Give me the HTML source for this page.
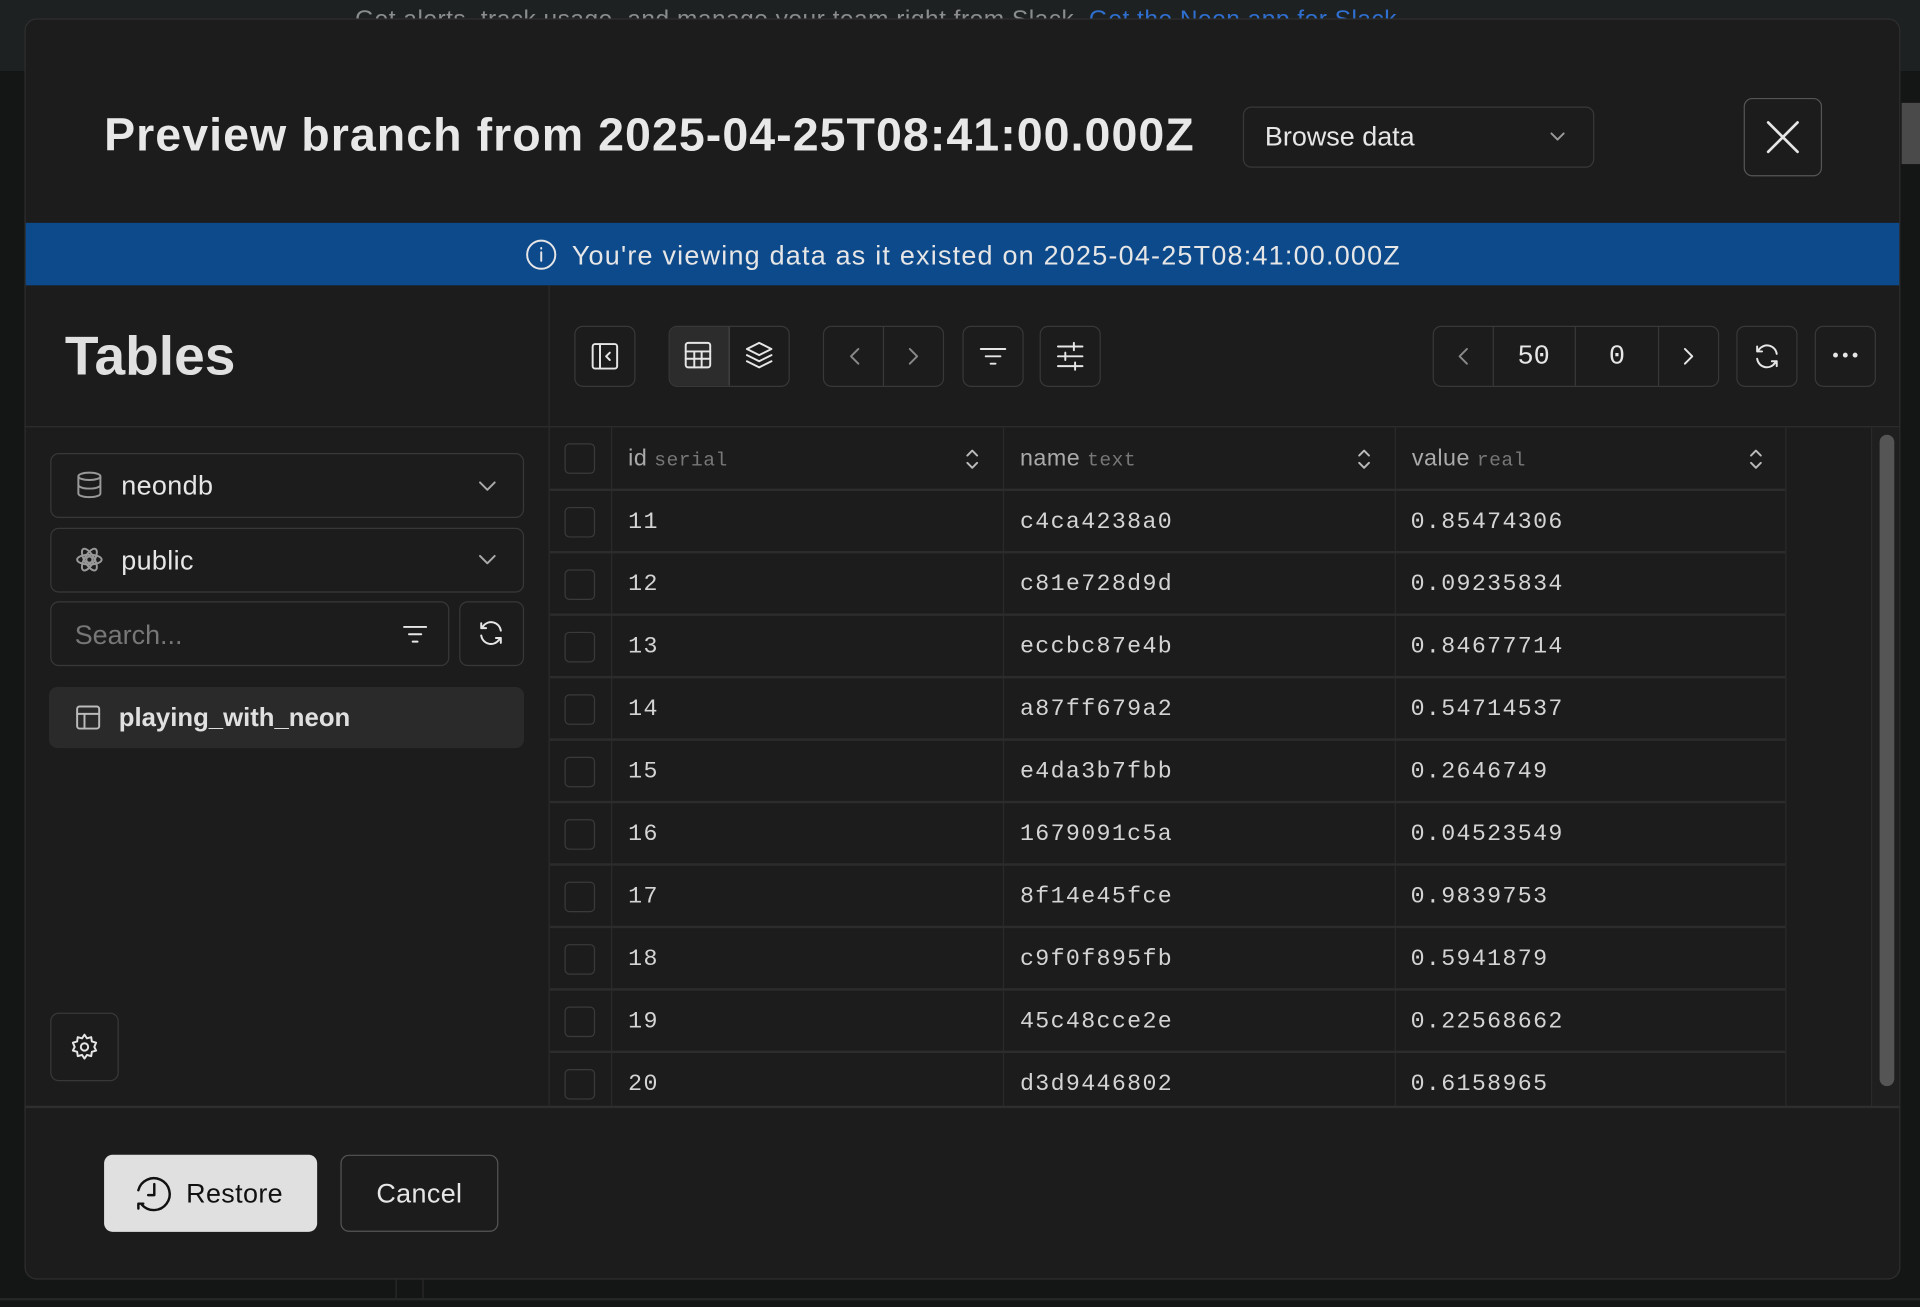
<!DOCTYPE html>
<html><head><meta charset="utf-8"><style>
*{box-sizing:border-box;margin:0;padding:0}
html,body{width:1920px;height:1307px;overflow:hidden;background:#141515}
#s{position:absolute;left:0;top:0;width:1568px;height:1067px;transform:scale(1.22449);transform-origin:0 0;font-family:"Liberation Sans",sans-serif;color:#e6e6e6}
.a{position:absolute}
.btn{position:absolute;border:1px solid #383838;border-radius:7px}
.mono{font-family:"Liberation Mono",monospace}
svg{position:absolute;fill:none;stroke:#e6e6e6;stroke-width:1.6;stroke-linecap:round;stroke-linejoin:round}
.row{position:absolute;left:449px;width:1009px;height:51px;border-top:2px solid #2c2c2c}
.row .cb{position:absolute;left:12px;top:13px;width:25px;height:25px;border:1px solid #3a3a3a;border-radius:4px}
.row .c{position:absolute;top:1px;height:49px;line-height:49px;font-family:"Liberation Mono",monospace;font-size:19px;color:#d4d4d4;letter-spacing:1.1px}
.vl{position:absolute;top:349px;height:554px;width:1px;background:#2a2a2a}
</style></head><body><div id="s">
<div class="a" style="left:0;top:0;width:1568px;height:58px;background:#1e2122"></div>
<div class="a" style="left:290px;top:5px;font-size:20px;color:#8a8c8d;white-space:nowrap;letter-spacing:0.4px">Get alerts, track usage, and manage your team right from Slack. <span style="color:#2f6fd0">Get the Neon app for Slack</span></div>
<div class="a" style="left:1553px;top:84px;width:15px;height:50px;background:#4a4a4a"></div>
<div class="a" style="left:323px;top:1045px;width:1px;height:16px;background:#2a2a2a"></div>
<div class="a" style="left:345px;top:1045px;width:1px;height:16px;background:#2a2a2a"></div>
<div class="a" style="left:0;top:1060px;width:1568px;height:2px;background:#262626"></div>

<div class="a" style="left:20px;top:15px;width:1532px;height:1030px;background:#1c1c1c;border:1px solid #2e2e2e;border-radius:10px;overflow:hidden">
</div>
<div class="a" style="left:85px;top:90px;font-size:38px;font-weight:bold;color:#e8e8e8;white-space:nowrap;letter-spacing:0.85px">Preview branch from 2025-04-25T08:41:00.000Z</div>
<div class="btn" style="left:1015px;top:87px;width:287px;height:50px"></div>
<div class="a" style="left:1033px;top:99px;font-size:22px">Browse data</div>
<svg style="left:1264px;top:104px" width="16" height="16" viewBox="0 0 16 16"><path d="M3 5l5 5 5-5" stroke="#999"/></svg>
<div class="btn" style="left:1424px;top:80px;width:64px;height:64px;border-color:#555"></div>
<svg style="left:1441px;top:97px" width="30" height="30" viewBox="0 0 30 30"><path d="M3 3l24 24M27 3L3 27" stroke-width="2.2"/></svg>

<div class="a" style="left:21px;top:182px;width:1530px;height:51px;background:#0d4a8c"></div>
<svg style="left:429px;top:195px" width="26" height="26" viewBox="0 0 26 26"><circle cx="13" cy="13" r="11.5"/><path d="M13 11v7M13 7.5v.5"/></svg>
<div class="a" style="left:467px;top:196px;font-size:22px;white-space:nowrap;letter-spacing:1px">You're viewing data as it existed on 2025-04-25T08:41:00.000Z</div>

<div class="a" style="left:448px;top:233px;width:1px;height:670px;background:#2a2a2a"></div>
<div class="a" style="left:21px;top:348px;width:1530px;height:1px;background:#2e2e2e"></div>
<div class="a" style="left:53px;top:265px;font-size:45px;font-weight:bold;color:#e0e0e0">Tables</div>

<!-- left panel -->
<div class="btn" style="left:41px;top:370px;width:387px;height:53px"></div>
<svg style="left:61px;top:384px" width="24" height="24" viewBox="0 0 24 24" ><ellipse cx="12" cy="5" rx="9" ry="3" stroke="#999"/><path d="M3 5v14c0 1.7 4 3 9 3s9-1.3 9-3V5M3 12c0 1.7 4 3 9 3s9-1.3 9-3" stroke="#999"/></svg>
<div class="a" style="left:99px;top:384px;font-size:22px;letter-spacing:0.3px">neondb</div>
<svg style="left:389px;top:388px" width="18" height="18" viewBox="0 0 18 18"><path d="M3 6l6 6 6-6" stroke="#aaa"/></svg>
<div class="btn" style="left:41px;top:431px;width:387px;height:53px"></div>
<svg style="left:61px;top:445px" width="24" height="24" viewBox="0 0 24 24"><circle cx="12" cy="12" r="2.5" stroke="#999"/><ellipse cx="12" cy="12" rx="10" ry="4" stroke="#999" transform="rotate(60 12 12)"/><ellipse cx="12" cy="12" rx="10" ry="4" stroke="#999" transform="rotate(-60 12 12)"/><ellipse cx="12" cy="12" rx="4" ry="10" stroke="#999" transform="rotate(90 12 12)"/></svg>
<div class="a" style="left:99px;top:445px;font-size:22px;letter-spacing:0.3px">public</div>
<svg style="left:389px;top:448px" width="18" height="18" viewBox="0 0 18 18"><path d="M3 6l6 6 6-6" stroke="#aaa"/></svg>
<div class="btn" style="left:41px;top:491px;width:326px;height:53px"></div>
<div class="a" style="left:61px;top:506px;font-size:22px;color:#777">Search...</div>
<svg style="left:328px;top:507px" width="22" height="22" viewBox="0 0 22 22"><path d="M2 5h18M6 11h10M9 17h4"/></svg>
<div class="btn" style="left:375px;top:491px;width:53px;height:53px"></div>
<svg style="left:389px;top:505px" width="24" height="24" viewBox="0 0 24 24"><path d="M20 10A8 8 0 0 0 5.5 6.5L4 8M4 4v4h4M4 14a8 8 0 0 0 14.5 3.5L20 16M20 20v-4h-4"/></svg>
<div class="a" style="left:40px;top:561px;width:388px;height:50px;background:#2a2a2a;border-radius:7px"></div>
<svg style="left:61px;top:575px" width="22" height="22" viewBox="0 0 22 22"><rect x="2" y="2" width="18" height="18" rx="2" stroke="#bbb"/><path d="M2 8h18M8 8v12" stroke="#bbb"/></svg>
<div class="a" style="left:97px;top:575px;font-size:21px;font-weight:bold;color:#e0e0e0">playing_with_neon</div>
<div class="btn" style="left:41px;top:827px;width:56px;height:56px"></div>
<svg style="left:57px;top:843px" width="24" height="24" viewBox="0 0 24 24"><circle cx="12" cy="12" r="3"/><path d="M12 2l2 3 3.5-1 .5 3.5 3.5 1-1.5 3.5 1.5 3-3.5 1-.5 3.5-3.5-1-2 3-2-3-3.5 1-.5-3.5-3.5-1 1.5-3-1.5-3.5 3.5-1 .5-3.5 3.5 1z"/></svg>

<!-- toolbar -->
<div class="btn" style="left:469px;top:266px;width:50px;height:50px"></div>
<svg style="left:482px;top:279px" width="24" height="24" viewBox="0 0 24 24"><rect x="2" y="2" width="20" height="20" rx="2"/><path d="M8 2v20M16 9l-3 3 3 3"/></svg>
<div class="btn" style="left:546px;top:266px;width:99px;height:50px;overflow:hidden"><div style="position:absolute;left:0;top:0;width:49px;height:48px;background:#2c2c2c;border-right:1px solid #444"></div></div>
<svg style="left:558px;top:278px" width="24" height="24" viewBox="0 0 24 24"><rect x="2" y="2" width="20" height="20" rx="2"/><path d="M2 9h20M2 15h20M9 9v13M15 9v13"/></svg>
<svg style="left:607px;top:277px" width="26" height="26" viewBox="0 0 26 26"><path d="M13 3l10 5-10 5-10-5zM3 13l10 5 10-5M3 18l10 5 10-5"/></svg>
<div class="btn" style="left:672px;top:266px;width:99px;height:50px"></div>
<div class="a" style="left:721px;top:267px;width:1px;height:48px;background:#383838"></div>
<svg style="left:688px;top:281px" width="20" height="20" viewBox="0 0 20 20"><path d="M13 4l-6 6 6 6" stroke="#888"/></svg>
<svg style="left:736px;top:281px" width="20" height="20" viewBox="0 0 20 20"><path d="M7 4l6 6-6 6" stroke="#888"/></svg>
<div class="btn" style="left:786px;top:266px;width:50px;height:50px"></div>
<svg style="left:799px;top:279px" width="24" height="24" viewBox="0 0 24 24"><path d="M2 6h20M6 12h12M10 18h4"/></svg>
<div class="btn" style="left:849px;top:266px;width:50px;height:50px"></div>
<svg style="left:862px;top:279px" width="24" height="24" viewBox="0 0 24 24"><path d="M2 4h20M2 12h20M2 20h20M15 1v6M8 9v6M16 17v6"/></svg>
<div class="btn" style="left:1170px;top:266px;width:234px;height:50px"></div>
<div class="a" style="left:1219px;top:267px;width:1px;height:48px;background:#383838"></div>
<div class="a" style="left:1286px;top:267px;width:1px;height:48px;background:#383838"></div>
<div class="a" style="left:1354px;top:267px;width:1px;height:48px;background:#383838"></div>
<svg style="left:1185px;top:281px" width="20" height="20" viewBox="0 0 20 20"><path d="M13 4l-6 6 6 6" stroke="#888"/></svg>
<div class="a mono" style="left:1219px;top:279px;width:67px;text-align:center;font-size:22px">50</div>
<div class="a mono" style="left:1287px;top:279px;width:67px;text-align:center;font-size:22px">0</div>
<svg style="left:1369px;top:281px" width="20" height="20" viewBox="0 0 20 20"><path d="M7 4l6 6-6 6"/></svg>
<div class="btn" style="left:1418px;top:266px;width:50px;height:50px"></div>
<svg style="left:1431px;top:279px" width="24" height="24" viewBox="0 0 24 24"><path d="M20 10A8 8 0 0 0 5.5 6.5L4 8M4 4v4h4M4 14a8 8 0 0 0 14.5 3.5L20 16M20 20v-4h-4"/></svg>
<div class="btn" style="left:1482px;top:266px;width:50px;height:50px"></div>
<svg style="left:1495px;top:285px" width="24" height="10" viewBox="0 0 24 10"><circle cx="4" cy="5" r="1.2" fill="#e6e6e6"/><circle cx="12" cy="5" r="1.2" fill="#e6e6e6"/><circle cx="20" cy="5" r="1.2" fill="#e6e6e6"/></svg>

<!-- table -->
<div class="vl" style="left:499px"></div><div class="vl" style="left:819px"></div><div class="vl" style="left:1139px"></div><div class="vl" style="left:1458px"></div>
<div class="a" style="left:461px;top:362px;width:25px;height:25px;border:1px solid #3a3a3a;border-radius:4px"></div>
<div class="a" style="left:513px;top:364px;font-size:19px;color:#aaa;letter-spacing:0.4px">id <span class="mono" style="font-size:16px;color:#777">serial</span></div>
<div class="a" style="left:833px;top:364px;font-size:19px;color:#aaa;letter-spacing:0.4px">name <span class="mono" style="font-size:16px;color:#777">text</span></div>
<div class="a" style="left:1153px;top:364px;font-size:19px;color:#aaa;letter-spacing:0.4px">value <span class="mono" style="font-size:16px;color:#777">real</span></div>
<svg style="left:786px;top:364px" width="16" height="22" viewBox="0 0 16 22"><path d="M4 8l4-4 4 4M4 14l4 4 4-4" stroke="#bbb"/></svg>
<svg style="left:1106px;top:364px" width="16" height="22" viewBox="0 0 16 22"><path d="M4 8l4-4 4 4M4 14l4 4 4-4" stroke="#bbb"/></svg>
<svg style="left:1426px;top:364px" width="16" height="22" viewBox="0 0 16 22"><path d="M4 8l4-4 4 4M4 14l4 4 4-4" stroke="#bbb"/></svg>

<div class="row" style="top:399px"><div class="cb"></div><div class="c" style="left:64px">11</div><div class="c" style="left:384px">c4ca4238a0</div><div class="c" style="left:703px">0.85474306</div></div>
<div class="row" style="top:450px"><div class="cb"></div><div class="c" style="left:64px">12</div><div class="c" style="left:384px">c81e728d9d</div><div class="c" style="left:703px">0.09235834</div></div>
<div class="row" style="top:501px"><div class="cb"></div><div class="c" style="left:64px">13</div><div class="c" style="left:384px">eccbc87e4b</div><div class="c" style="left:703px">0.84677714</div></div>
<div class="row" style="top:552px"><div class="cb"></div><div class="c" style="left:64px">14</div><div class="c" style="left:384px">a87ff679a2</div><div class="c" style="left:703px">0.54714537</div></div>
<div class="row" style="top:603px"><div class="cb"></div><div class="c" style="left:64px">15</div><div class="c" style="left:384px">e4da3b7fbb</div><div class="c" style="left:703px">0.2646749</div></div>
<div class="row" style="top:654px"><div class="cb"></div><div class="c" style="left:64px">16</div><div class="c" style="left:384px">1679091c5a</div><div class="c" style="left:703px">0.04523549</div></div>
<div class="row" style="top:705px"><div class="cb"></div><div class="c" style="left:64px">17</div><div class="c" style="left:384px">8f14e45fce</div><div class="c" style="left:703px">0.9839753</div></div>
<div class="row" style="top:756px"><div class="cb"></div><div class="c" style="left:64px">18</div><div class="c" style="left:384px">c9f0f895fb</div><div class="c" style="left:703px">0.5941879</div></div>
<div class="row" style="top:807px"><div class="cb"></div><div class="c" style="left:64px">19</div><div class="c" style="left:384px">45c48cce2e</div><div class="c" style="left:703px">0.22568662</div></div>
<div class="row" style="top:858px;height:45px"><div class="cb"></div><div class="c" style="left:64px">20</div><div class="c" style="left:384px">d3d9446802</div><div class="c" style="left:703px">0.6158965</div></div>
<div class="a" style="left:1528px;top:349px;width:23px;height:554px;background:#1f1f1f;border-left:1px solid #2a2a2a"></div>
<div class="a" style="left:1535px;top:355px;width:12px;height:532px;background:#555;border-radius:6px"></div>

<!-- footer -->
<div class="a" style="left:21px;top:903px;width:1530px;height:2px;background:#2e2e2e"></div>
<div class="a" style="left:85px;top:943px;width:174px;height:63px;background:#e0e0e0;border-radius:7px"></div>
<svg style="left:108px;top:957px" width="36" height="36" viewBox="0 0 36 36" ><path d="M8 27A13 13 0 1 0 5 15M5 30v-4h4M18 10v9h-5" stroke="#111" stroke-width="2"/></svg>
<div class="a" style="left:152px;top:962px;font-size:22px;color:#111;letter-spacing:0.3px">Restore</div>
<div class="btn" style="left:278px;top:943px;width:129px;height:63px;border-color:#555"></div>
<div class="a" style="left:278px;top:962px;width:129px;text-align:center;font-size:22px;letter-spacing:0.3px">Cancel</div>
</div></body></html>
